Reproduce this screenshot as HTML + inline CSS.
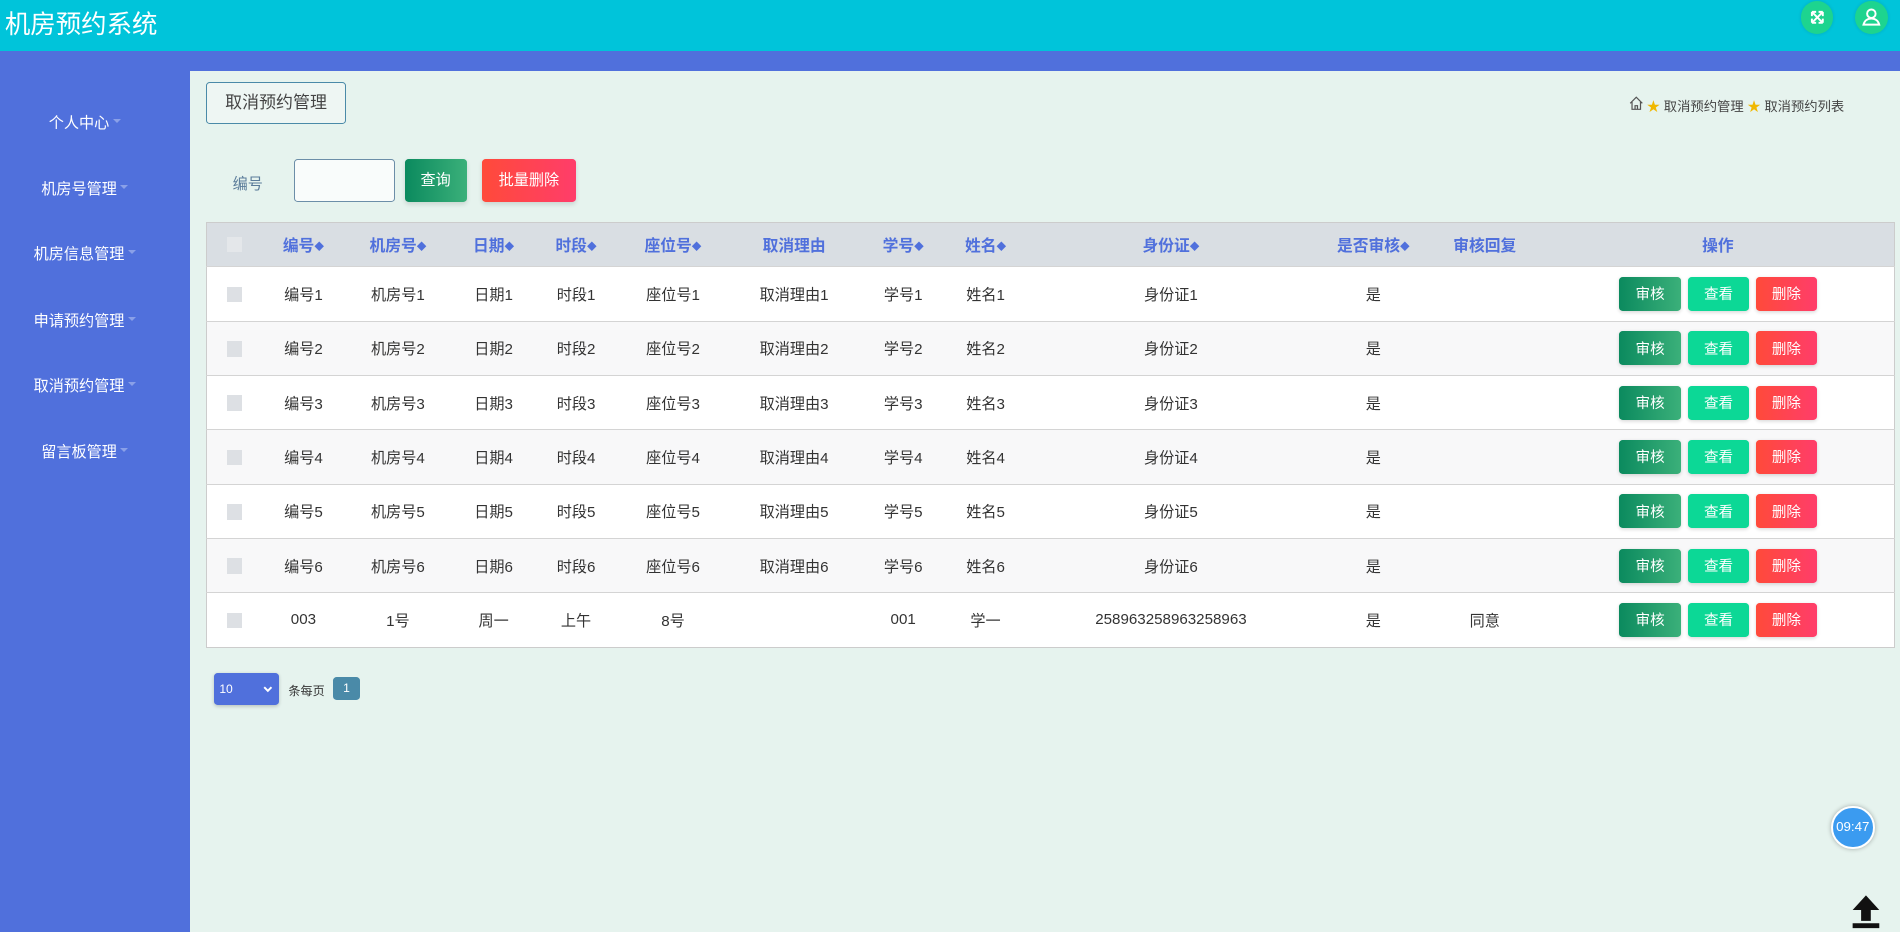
<!DOCTYPE html>
<html><head><meta charset="utf-8"><style>
html,body{margin:0;padding:0;overflow:hidden}
body{width:1568px;height:769px;zoom:1.21173;font-family:"Liberation Sans","Noto Sans CJK SC",sans-serif;background:#e6f3ee;position:relative}
.hdr{position:absolute;left:0;top:0;width:1568px;height:42px;background:#00c4da}
.hdr .t{position:absolute;left:4px;top:3px;color:#fff;font-size:21px}
.circ{position:absolute;top:1px;width:27px;height:27px;border-radius:50%;background:#1dd48f;box-shadow:0 0 3px rgba(0,0,0,.12)}
.band{position:absolute;left:0;top:42px;width:1568px;height:17px;background:#5070dc}
.side{position:absolute;left:0;top:59px;width:157px;height:710px;background:#5070dc}
.side div{position:absolute;left:0;width:140px;text-align:center;color:#fff;font-size:12.5px}
.side div:after{content:"";display:inline-block;border:4px solid transparent;border-top:4px solid #8aa0e8;margin-left:3px;vertical-align:1px}
.tag{position:absolute;left:170px;top:68px;width:114px;height:33px;border:1.5px solid #4a8aa8;border-radius:3px;font-size:14px;color:#444;line-height:33px;text-align:center;background:#eef6f3}
.bc{position:absolute;right:46px;top:79px;font-size:11px;color:#444}
.btn{position:absolute;color:#fff;font-size:12.5px;text-align:center;border-radius:3px;box-shadow:0 2px 4px rgba(0,0,0,.12)}
table{position:absolute;left:170px;top:183px;width:1394px;border-collapse:collapse;table-layout:fixed;font-size:12.5px;color:#333;border:1px solid #ccc}
th{height:36px;padding:0;background:#d9dee3;color:#5070dc;font-weight:bold;font-size:13px;text-align:center}
td{height:44px;padding:0;text-align:center;border-top:1px solid #d4d4d4}
tr:nth-child(odd) td{background:#f8f8f9}
tr:nth-child(even) td{background:#fff}
.cb{display:inline-block;width:13px;height:13px;background:#dde0e4;vertical-align:middle}
.ar{font-size:8px;vertical-align:1px}
.b{display:inline-flex;align-items:center;justify-content:center;width:51px;height:28px;color:#fff;font-size:12px;border-radius:3px;margin:0 3px;box-shadow:0 1px 3px rgba(0,0,0,.15);vertical-align:middle}
.sh{background:linear-gradient(90deg,#0b8a5e,#3bb07a)}.ck{background:#0cd896;width:50px}.dl{background:linear-gradient(90deg,#ff4a3a,#ff3d6a);width:50px}
</style></head><body>
<div class="hdr"><div class="t">机房预约系统</div>
<div class="circ" style="left:1486px"><svg width="27" height="27" viewBox="0 0 27 27" fill="none" stroke="#fff" stroke-width="1.6"><path d="M9 9l9 9M18 9l-9 9M9 9h3.5M9 9v3.5M18 9h-3.5M18 9v3.5M9 18h3.5M9 18v-3.5M18 18h-3.5M18 18v-3.5"/></svg></div>
<div class="circ" style="left:1531px"><svg width="27" height="27" viewBox="0 0 27 27" fill="none" stroke="#fff" stroke-width="1.6"><circle cx="13.5" cy="10.5" r="3.5"/><path d="M7 19.5c1-3.5 3.5-5 6.5-5s5.5 1.5 6.5 5z"/></svg></div>
</div>
<div class="band"></div>
<div class="side">
<div style="top:33px">个人中心</div><div style="top:87px">机房号管理</div><div style="top:141px">机房信息管理</div><div style="top:196px">申请预约管理</div><div style="top:250px">取消预约管理</div><div style="top:304px">留言板管理</div>
</div>
<div class="tag">取消预约管理</div>
<div class="bc"><svg width="12" height="12" viewBox="0 0 12 12" fill="none" stroke="#555"><path d="M1 6L6 1l5 5M2.5 5v6h7V5M5 11V8h2v3"/></svg> <span style="color:#f0b800">★</span> 取消预约管理 <span style="color:#f0b800">★</span> 取消预约列表</div>
<div style="position:absolute;left:192px;top:142px;font-size:12.5px;color:#5a7b99">编号</div>
<div style="position:absolute;left:243px;top:131px;width:81px;height:34px;border:1px solid #6c8ea8;border-radius:3px;background:#f9fcfb"></div>
<div class="btn" style="left:334px;top:131px;width:51px;height:36px;line-height:36px;background:linear-gradient(90deg,#0b8a5e,#3bb07a)">查询</div>
<div class="btn" style="left:398px;top:131px;width:77px;height:36px;line-height:36px;background:linear-gradient(90deg,#ff4a3a,#ff3d6a)">批量删除</div>
<table>
<colgroup><col style="width:46px"><col style="width:68px"><col style="width:88px"><col style="width:70px"><col style="width:66px"><col style="width:94px"><col style="width:106px"><col style="width:74px"><col style="width:62px"><col style="width:244px"><col style="width:90px"><col style="width:94px"><col></colgroup>
<tr><th><span class="cb" style="background:#e4e7ea"></span></th><th>编号<span class="ar">◆</span></th><th>机房号<span class="ar">◆</span></th><th>日期<span class="ar">◆</span></th><th>时段<span class="ar">◆</span></th><th>座位号<span class="ar">◆</span></th><th>取消理由</th><th>学号<span class="ar">◆</span></th><th>姓名<span class="ar">◆</span></th><th>身份证<span class="ar">◆</span></th><th>是否审核<span class="ar">◆</span></th><th>审核回复</th><th>操作</th></tr>
<tr><td><span class="cb"></span></td><td>编号1</td><td>机房号1</td><td>日期1</td><td>时段1</td><td>座位号1</td><td>取消理由1</td><td>学号1</td><td>姓名1</td><td>身份证1</td><td>是</td><td></td><td><span class="b sh">审核</span><span class="b ck">查看</span><span class="b dl">删除</span></td></tr>
<tr><td><span class="cb"></span></td><td>编号2</td><td>机房号2</td><td>日期2</td><td>时段2</td><td>座位号2</td><td>取消理由2</td><td>学号2</td><td>姓名2</td><td>身份证2</td><td>是</td><td></td><td><span class="b sh">审核</span><span class="b ck">查看</span><span class="b dl">删除</span></td></tr>
<tr><td><span class="cb"></span></td><td>编号3</td><td>机房号3</td><td>日期3</td><td>时段3</td><td>座位号3</td><td>取消理由3</td><td>学号3</td><td>姓名3</td><td>身份证3</td><td>是</td><td></td><td><span class="b sh">审核</span><span class="b ck">查看</span><span class="b dl">删除</span></td></tr>
<tr><td><span class="cb"></span></td><td>编号4</td><td>机房号4</td><td>日期4</td><td>时段4</td><td>座位号4</td><td>取消理由4</td><td>学号4</td><td>姓名4</td><td>身份证4</td><td>是</td><td></td><td><span class="b sh">审核</span><span class="b ck">查看</span><span class="b dl">删除</span></td></tr>
<tr><td><span class="cb"></span></td><td>编号5</td><td>机房号5</td><td>日期5</td><td>时段5</td><td>座位号5</td><td>取消理由5</td><td>学号5</td><td>姓名5</td><td>身份证5</td><td>是</td><td></td><td><span class="b sh">审核</span><span class="b ck">查看</span><span class="b dl">删除</span></td></tr>
<tr><td><span class="cb"></span></td><td>编号6</td><td>机房号6</td><td>日期6</td><td>时段6</td><td>座位号6</td><td>取消理由6</td><td>学号6</td><td>姓名6</td><td>身份证6</td><td>是</td><td></td><td><span class="b sh">审核</span><span class="b ck">查看</span><span class="b dl">删除</span></td></tr>
<tr><td><span class="cb"></span></td><td>003</td><td>1号</td><td>周一</td><td>上午</td><td>8号</td><td></td><td>001</td><td>学一</td><td>258963258963258963</td><td>是</td><td>同意</td><td><span class="b sh">审核</span><span class="b ck">查看</span><span class="b dl">删除</span></td></tr>
</table>
<div style="position:absolute;left:177px;top:555px;width:53px;height:27px;background:#5070dc;border-radius:3px;color:#fff;font-size:10px;line-height:27px;box-shadow:0 1px 3px rgba(0,0,0,.2)"><span style="margin-left:4px">10</span><svg style="position:absolute;right:5px;top:11px" width="8" height="6" viewBox="0 0 8 6" fill="none" stroke="#fff" stroke-width="1.6"><path d="M1 1l3 3 3-3"/></svg></div>
<div style="position:absolute;left:238px;top:563px;font-size:10px;color:#333">条每页</div>
<div style="position:absolute;left:275px;top:559px;width:22px;height:19px;background:#4a8aa8;border-radius:3px;color:#fff;font-size:10px;line-height:19px;text-align:center">1</div>
<div style="position:absolute;left:1511px;top:665px;width:36px;height:36px;border-radius:50%;background:#3b9bf0;border:2px solid #fff;box-sizing:border-box;box-shadow:0 0 4px rgba(0,0,0,.3);color:#fff;font-size:11px;line-height:32px;text-align:center">09:47</div>
<svg style="position:absolute;left:1526px;top:737px" width="28" height="30" viewBox="0 0 28 30"><path d="M14 2L3 14h7v9h8v-9h7z M3 25h22v4H3z" fill="#111"/></svg>
</body></html>
